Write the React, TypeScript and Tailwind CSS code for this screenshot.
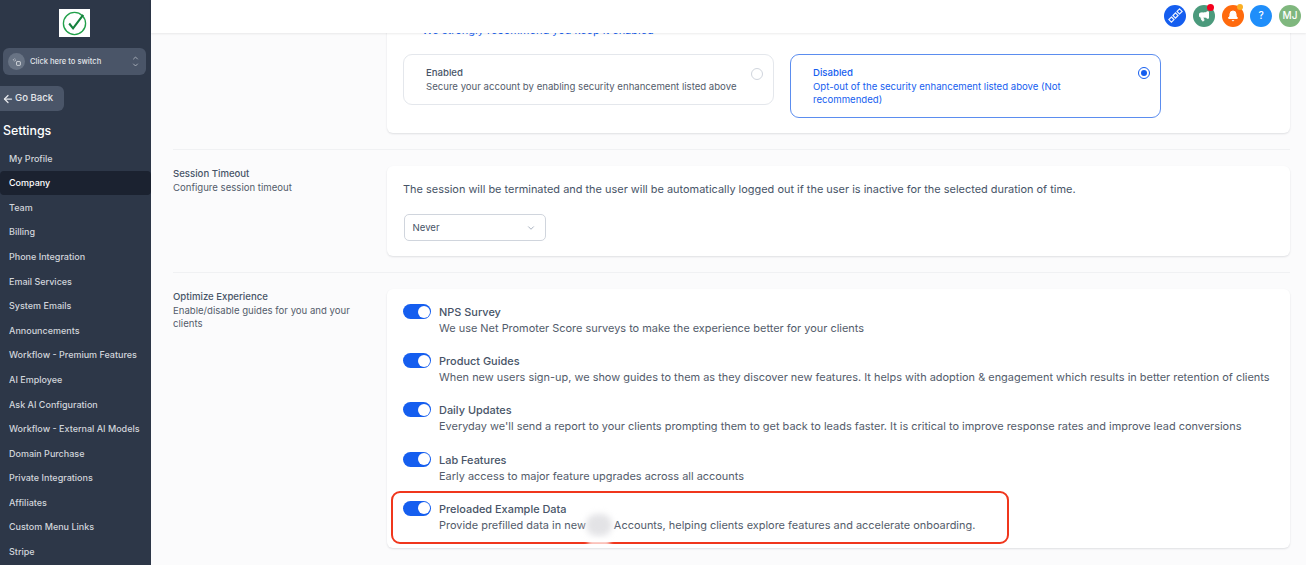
import { ArrowLeft, Bell, ChevronDown, ChevronUp, Megaphone } from 'lucide-react';

const navItems = [
  'My Profile',
  'Company',
  'Team',
  'Billing',
  'Phone Integration',
  'Email Services',
  'System Emails',
  'Announcements',
  'Workflow - Premium Features',
  'AI Employee',
  'Ask AI Configuration',
  'Workflow - External AI Models',
  'Domain Purchase',
  'Private Integrations',
  'Affiliates',
  'Custom Menu Links',
  'Stripe',
];

const guides = [
  { title: 'NPS Survey', text: 'We use Net Promoter Score surveys to make the experience better for your clients' },
  {
    title: 'Product Guides',
    text: 'When new users sign-up, we show guides to them as they discover new features. It helps with adoption & engagement which results in better retention of clients',
  },
  {
    title: 'Daily Updates',
    text: "Everyday we'll send a report to your clients prompting them to get back to leads faster. It is critical to improve response rates and improve lead conversions",
  },
  { title: 'Lab Features', text: 'Early access to major feature upgrades across all accounts' },
];

function Sidebar() {
  return (
    <aside className="flex h-full w-[151px] shrink-0 flex-col overflow-hidden bg-[#2d3748]">
      <div className="ml-[59px] mt-[9px] flex h-[28px] w-[31px] items-center justify-center bg-white">
        <svg viewBox="0 0 28 28" className="h-[27px] w-[27px]" fill="none">
          <circle cx="14" cy="14" r="11.5" stroke="#22a04a" strokeWidth="1.4" />
          <path d="M8.5 14 L12.5 19 L23 5" stroke="#15803d" strokeWidth="2.2" />
        </svg>
      </div>
      <div className="ml-[3px] mr-[5px] mt-[11px] flex h-[27px] items-center rounded-md bg-[#4a5568] pl-[5px] pr-[6px]">
        <span className="flex h-[17px] w-[17px] items-center justify-center rounded-full bg-[#687384]">
          <svg viewBox="0 0 12 12" className="h-[10px] w-[10px]" fill="none" stroke="#e5e7eb" strokeWidth="1">
            <circle cx="3" cy="3.5" r="1.4" strokeDasharray="1 1" />
            <rect x="5.5" y="5.5" width="4.5" height="4.5" rx="0.6" />
          </svg>
        </span>
        <span className="ml-[5px] flex-1 text-[7.6px] font-medium text-[#e2e5ea]">Click here to switch</span>
        <span className="flex flex-col text-[#cbd0d8]">
          <ChevronUp className="-mb-[1px] h-[8px] w-[9px]" />
          <ChevronDown className="h-[8px] w-[9px]" />
        </span>
      </div>
      <div className="mt-[11px] flex h-[25px] w-[64px] items-center rounded-r-md bg-[#4a5568] pl-[2px] text-[9.6px] font-medium text-[#e5e7eb]">
        <ArrowLeft className="mr-[1px] h-[12px] w-[12px]" strokeWidth={2.5} />
        Go Back
      </div>
      <h2 className="mb-[6.5px] ml-[3px] mt-[11px] text-[12.4px] leading-[18px] font-medium text-white">Settings</h2>
      <nav className="flex flex-col gap-[0.58px]">
        {navItems.map((item) => (
          <a
            key={item}
            className={
              item === 'Company'
                ? 'flex h-[24px] items-center rounded bg-[#1b2230] pl-[9px] text-[9px] font-medium text-white'
                : 'flex h-[24px] items-center pl-[9px] text-[9px] font-medium text-[#d1d5db]'
            }
          >
            {item}
          </a>
        ))}
      </nav>
    </aside>
  );
}

function TopBar() {
  return (
    <header className="relative z-10 flex h-[33px] shrink-0 items-center justify-end gap-[6.75px] bg-white pb-[2px] pr-[5px] shadow-[0_1px_2px_rgba(0,0,0,0.08)]">
      <span className="flex h-[22px] w-[22px] items-center justify-center rounded-full bg-[#155eef]">
        <svg viewBox="0 0 14 14" className="h-[15px] w-[15px]" fill="none" stroke="#eef3fe" strokeWidth="1.1">
          <path d="M3.2 8.4 L5.6 10.8 L3.2 13.2 L0.8 10.8 Z" />
          <path d="M7 4.6 L9.4 7 L7 9.4 L4.6 7 Z" />
          <path d="M10.8 0.8 L13.2 3.2 L10.8 5.6 L8.4 3.2 Z" />
        </svg>
      </span>
      <span className="relative flex h-[22px] w-[22px] items-center justify-center rounded-full bg-[#4b9a7c]">
        <Megaphone className="h-[12px] w-[12px] text-white" fill="white" />
        <span className="absolute right-[0.5px] -top-[1px] h-[7px] w-[7px] rounded-full bg-[#f5001d]" />
      </span>
      <span className="relative flex h-[22px] w-[22px] items-center justify-center rounded-full bg-[#ff6a0d]">
        <Bell className="h-[12px] w-[12px] text-white" fill="white" />
        <span className="absolute right-[0.5px] -top-[0.5px] h-[6px] w-[6px] rounded-full bg-[#fbb024]" />
      </span>
      <span className="flex h-[22px] w-[22px] items-center justify-center rounded-full bg-[#1f8efa] text-[10px] font-medium text-white">?</span>
      <span className="flex h-[22px] w-[22px] items-center justify-center rounded-full bg-[#7fb77e] text-[10px] font-medium text-white">MJ</span>
    </header>
  );
}

function Toggle() {
  return (
    <span className="flex h-[15px] w-[28px] shrink-0 items-center justify-end rounded-full bg-[#155eef] pr-[1.5px]">
      <span className="h-[12px] w-[12px] rounded-full bg-white" />
    </span>
  );
}

function Choice({ title, text, active }: { title: string; text: string; active?: boolean }) {
  return (
    <div
      className={
        active
          ? 'flex h-[64px] w-[371px] items-start justify-between rounded-[9px] border border-[#5b8def] pl-[22px] pr-[10px] pt-[11px] text-[#155eef]'
          : 'flex h-[51px] w-[371px] items-start justify-between rounded-[9px] border border-[#e4e7ec] pl-[22px] pr-[10px] pt-[11px] text-[#535c6b]'
      }
    >
      <div className="text-[9.6px] leading-[13.6px]">
        <div className={active ? 'font-medium' : 'font-medium text-[#475467]'}>{title}</div>
        <div className={active ? 'max-w-[300px]' : 'whitespace-nowrap'}>{text}</div>
      </div>
      {active ? (
        <span className="mt-[1px] flex h-[12px] w-[12px] items-center justify-center rounded-full border border-[#155eef]">
          <span className="h-[6px] w-[6px] rounded-full bg-[#155eef]" />
        </span>
      ) : (
        <span className="mt-[2px] h-[12px] w-[12px] rounded-full border border-[#d0d5dd]" />
      )}
    </div>
  );
}

function Section({ title, text, children }: { title?: string; text?: string; children: React.ReactNode }) {
  return (
    <section className="flex">
      <div className="w-[213.5px] shrink-0 pr-[30px] pt-[1px] text-[9.6px] leading-[13.6px] text-[#535c6b]">
        {title && <div className="font-medium text-[#475467]">{title}</div>}
        {text && <div>{text}</div>}
      </div>
      <div className="min-w-0 flex-1 rounded-[6px] bg-white shadow-[0_1px_2px_rgba(16,24,40,0.12)]">{children}</div>
    </section>
  );
}

export default function App() {
  return (
    <div className="flex h-[565px] w-[1306px] overflow-hidden font-['Inter',sans-serif]">
      <Sidebar />
      <div className="flex min-w-0 flex-1 flex-col">
        <TopBar />
        <main className="relative flex-1 overflow-hidden bg-[#fbfbfc] pl-[22px] pr-[16px]">
          <div className="-mt-[20px]">
            <Section>
              <div className="h-[120px] px-[16.5px] pt-[11px]">
                <div className="flex items-center gap-[10px] pl-[5px] text-[11px] leading-[13px] text-[#155eef]">
                  <span className="h-[4px] w-[4px] rounded-full bg-[#155eef]" />
                  We strongly recommend you keep it enabled
                </div>
                <div className="mt-[17px] flex items-start gap-[16px]">
                  <Choice title="Enabled" text="Secure your account by enabling security enhancement listed above" />
                  <Choice active title="Disabled" text="Opt-out of the security enhancement listed above (Not recommended)" />
                </div>
              </div>
            </Section>
            <hr className="my-[16px] border-[#f0f1f3]" />
            <Section title="Session Timeout" text="Configure session timeout">
              <div className="h-[90px] px-[16.5px] pt-[15px]">
                <p className="text-[10.95px] leading-[16px] text-[#475467]">
                  The session will be terminated and the user will be automatically logged out if the user is inactive for the selected duration of time.
                </p>
                <div className="ml-[0.5px] mt-[17px] flex h-[27px] w-[142px] items-center justify-between rounded-[5px] border border-[#d0d5dd] pl-[8px] pr-[9px] pt-[1px] text-[9.6px] text-[#475467]">
                  Never
                  <ChevronDown className="h-[10px] w-[10px] text-[#98a2b3]" />
                </div>
              </div>
            </Section>
            <hr className="my-[16px] border-[#f0f1f3]" />
            <Section title="Optimize Experience" text="Enable/disable guides for you and your clients">
              <div className="flex h-[259px] flex-col gap-[20.2px] px-[16.5px] pt-[15px]">
                {guides.map((g) => (
                  <div key={g.title} className="flex h-[29px] gap-[8px]">
                    <Toggle />
                    <div className="pt-[1px]">
                      <div className="text-[10.95px] leading-[14px] font-medium text-[#475467]">{g.title}</div>
                      <div className="mt-[2px] text-[10.95px] leading-[14px] whitespace-nowrap text-[#535c6b]">{g.text}</div>
                    </div>
                  </div>
                ))}
                <div className="flex h-[29px] gap-[8px]">
                  <Toggle />
                  <div className="pt-[1px]">
                    <div className="text-[10.95px] leading-[14px] font-medium text-[#475467]">Preloaded Example Data</div>
                    <div className="mt-[2px] text-[10.95px] leading-[14px] whitespace-nowrap text-[#535c6b]">
                      Provide prefilled data in new<span className="inline-block w-[28px]" />Accounts, helping clients explore features and accelerate onboarding.
                    </div>
                  </div>
                </div>
              </div>
            </Section>
          </div>
          {/* red annotation and the blurred patch lie over the page */}
          <div className="absolute left-[240px] top-[458px] h-[53px] w-[618px] rounded-[9px] border-2 border-[#f0361c]" />
          <div className="absolute left-[435px] top-[481px] h-[22px] w-[26px] rounded-full bg-[#e3e3e6] blur-[3px]" />
          <div className="absolute left-[437px] top-[507px] h-[5px] w-[22px] bg-white blur-[2px]" />
        </main>
      </div>
    </div>
  );
}
